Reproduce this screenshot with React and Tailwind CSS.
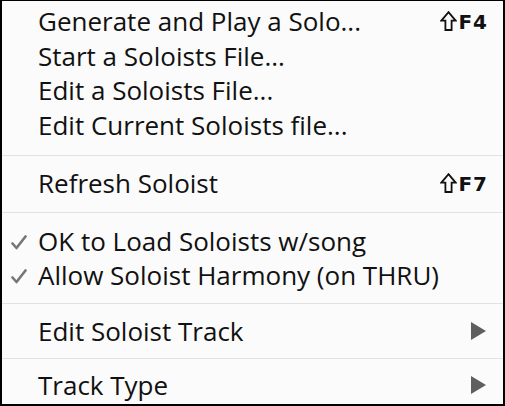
import React from 'react';

const font = { fontFamily: '"Open Sans", "Noto Sans", sans-serif' };

function Shift({ k }) {
  return (
    <span
      className="flex items-end gap-[1px] text-[20px] font-bold leading-none tracking-[1px] text-[#111]"
      style={{ fontFamily: '"DejaVu Sans", sans-serif' }}
    >
      <svg width="17" height="20" viewBox="0 0 17 20">
        <path d="M8.5 1.2 L15.6 9.6 L11.6 9.6 L11.6 19 L5.4 19 L5.4 9.6 L1.4 9.6 Z" fill="none" stroke="#111" strokeWidth="1.8" />
      </svg>
      <span className="mb-[-1px]">{k}</span>
    </span>
  );
}

function Arrow() {
  return (
    <svg width="15" height="18" viewBox="0 0 15 18" className="mr-[2px]">
      <path d="M0 0 L15 9 L0 18 Z" fill="#5f5f5f" />
    </svg>
  );
}

function Check() {
  return (
    <svg width="16" height="15" viewBox="0 0 16 15">
      <path d="M1.5 8.5 L5.5 13 L14.5 1.5" fill="none" stroke="#767676" strokeWidth="2.6" strokeLinecap="round" strokeLinejoin="round" />
    </svg>
  );
}

function Row({ label, right, check }) {
  return (
    <div className="relative flex h-[34.5px] items-center pl-[36px] pr-[15px] leading-[34.5px]">
      {check && (
        <span className="absolute left-[9px] top-[11px]">
          <Check />
        </span>
      )}
      <span className="flex-1 whitespace-nowrap">{label}</span>
      {right}
    </div>
  );
}

function Sep({ above, below }) {
  return (
    <div style={{ paddingTop: above, paddingBottom: below }}>
      <div className="h-px bg-[#e2e2e2]" />
    </div>
  );
}

export default function App() {
  return (
    <div
      className="h-[406px] w-[505px] border-b-2 border-l-2 border-r-2 border-t border-black bg-[#fbfbfb] text-[26px] text-[#111]"
      style={font}
    >
      <div className="pt-[3px]">
        <Row label="Generate and Play a Solo..." right={<Shift k="F4" />} />
        <Row label="Start a Soloists File..." />
        <Row label="Edit a Soloists File..." />
        <Row label="Edit Current Soloists file..." />
      </div>
      <Sep above="13px" below="10px" />
      <Row label="Refresh Soloist" right={<Shift k="F7" />} />
      <Sep above="11px" below="11px" />
      <Row label="OK to Load Soloists w/song" check />
      <Row label="Allow Soloist Harmony (on THRU)" check />
      <Sep above="10px" below="10px" />
      <Row label="Edit Soloist Track" right={<Arrow />} />
      <Sep above="10px" below="9px" />
      <Row label="Track Type" right={<Arrow />} />
    </div>
  );
}
